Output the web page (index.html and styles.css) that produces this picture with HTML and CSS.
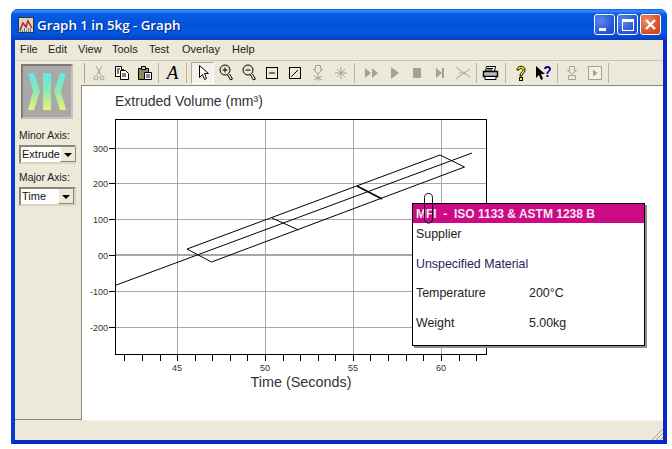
FILE: index.html
```html
<!DOCTYPE html>
<html lang="en">
<head>
    <meta charset="UTF-8">
    <title>Graph 1 in 5kg - Graph</title>
    <link rel="stylesheet" href="styles.css">
</head>
<body>
<div class="window">
    <div class="titlebar">
        <svg class="app-icon" width="16" height="16" viewBox="0 0 16 16">
            <rect x="0.5" y="0.5" width="15" height="15" fill="#d8d4c8" stroke="#333"/>
            <path d="M2 13 5 6 8 10 10 4 14 11" fill="none" stroke="#b02020" stroke-width="1.5"/>
            <path d="M2 14h12M2 12h2M6 12h2M10 12h3" stroke="#222" stroke-dasharray="1 1"/>
        </svg>
        <span class="title">Graph 1 in 5kg - Graph</span>
        <div class="caption-btns">
            <span class="cap-btn"><i class="cap-min"></i></span>
            <span class="cap-btn"><i class="cap-max"></i></span>
            <span class="cap-btn cap-close">
                <svg width="13" height="13" viewBox="0 0 13 13"><path d="M2 2 11 11M11 2 2 11" stroke="#fff" stroke-width="2.4"/></svg>
            </span>
        </div>
    </div>

    <div class="menubar">
        <span class="m1">File</span>
        <span class="m2">Edit</span>
        <span class="m3">View</span>
        <span class="m4">Tools</span>
        <span class="m5">Test</span>
        <span class="m6">Overlay</span>
        <span class="m7">Help</span>
    </div>

    <div class="main">
        <div class="side">
            <div class="logo">
                <svg width="46" height="38" viewBox="0 0 46 38">
                    <defs>
                        <linearGradient id="lg" x1="0" y1="0" x2="0" y2="1">
                            <stop offset="0" stop-color="#5fe8e6"/>
                            <stop offset="0.5" stop-color="#8fe8b0"/>
                            <stop offset="1" stop-color="#f0f07a"/>
                        </linearGradient>
                    </defs>
                    <path d="M4 0h6l6 18-6 19H4l5-19z" fill="url(#lg)"/>
                    <path d="M42 0h-6l-6 18 6 19h6l-5-19z" fill="url(#lg)"/>
                    <rect x="19" y="0" width="8" height="37" fill="url(#lg)"/>
                </svg>
            </div>
            <label class="axis-label">Minor Axis:</label>
            <div class="combo"><span class="combo-text">Extrude</span><span class="combo-btn"></span></div>
            <label class="axis-label axis-second">Major Axis:</label>
            <div class="combo"><span class="combo-text">Time</span><span class="combo-btn"></span></div>
        </div>

        <div class="right">
            <div class="toolbar">
                <span class="grip"></span>
                <span class="tb"><svg width="16" height="16" viewBox="0 0 16 16" fill="none" stroke="#a5a295"><path d="M5 1 10 10M11 1 6 10"/><circle cx="5" cy="13" r="2"/><circle cx="11" cy="13" r="2"/></svg></span>
                <span class="tb"><svg width="16" height="16" viewBox="0 0 16 16"><path d="M1.500 1.500h6v3h2v7h-8z" fill="#fff" stroke="#000"/><path d="M6.500 5.500h5l3 3v6h-8z" fill="#fff" stroke="#000"/><path d="M3 4h3M3 6h2M3 8h2M8 9h4M8 11h4" stroke="#000"/></svg></span>
                <span class="tb"><svg width="16" height="16" viewBox="0 0 16 16"><path d="M1.500 3.500h10v11h-10z" fill="#8a8a52" stroke="#000"/><path d="M4.500 1.500h4v3h-4z" fill="#ccc" stroke="#000"/><path d="M7.500 7.500h7v7h-7z" fill="#fff" stroke="#000"/><path d="M9 10h4M9 12h4" stroke="#008"/></svg></span>
                <span class="sep"></span>
                <span class="tb tb-a">A</span>
                <span class="sep"></span>
                <span class="tb tb-on tb-gap"><svg width="16" height="18" viewBox="0 0 16 18"><path d="M4.500 1.500v12l3-3 2 5 2-1-2-5h4z" fill="#fff" stroke="#000"/></svg></span>
                <span class="tb"><svg width="16" height="18" viewBox="0 0 16 18" fill="none" stroke="#000"><circle cx="7" cy="6" r="5"/><path d="M7 3.500v5M4.500 6h5M9.500 11l3 5 2-1-3-5"/></svg></span>
                <span class="tb"><svg width="16" height="18" viewBox="0 0 16 18" fill="none" stroke="#000"><circle cx="7" cy="6" r="5"/><path d="M4.500 6h5M9.500 11l3 5 2-1-3-5"/></svg></span>
                <span class="tb"><svg width="14" height="14" viewBox="0 0 14 14" fill="none" stroke="#000"><rect x="1.500" y="1.500" width="11" height="11"/><path d="M4 7h6"/></svg></span>
                <span class="tb"><svg width="14" height="14" viewBox="0 0 14 14" fill="none" stroke="#000"><rect x="1.500" y="1.500" width="11" height="11"/><path d="M3.500 10.500 10 4"/></svg></span>
                <span class="tb"><svg width="16" height="18" viewBox="0 0 16 18" fill="none" stroke="#a5a295"><path d="M5.500 1.500h5v4h2L8 10 3.500 5.500h2zM8 10v7M4 12l8 4M12 12l-8 4"/></svg></span>
                <span class="tb"><svg width="16" height="16" viewBox="0 0 16 16" fill="none" stroke="#a5a295"><path d="M8 2v12M2 8h12M4 4l8 8M12 4l-8 8"/></svg></span>
                <span class="sep"></span>
                <span class="tb tb-gap"><svg width="16" height="12" viewBox="0 0 16 12" fill="#a5a295"><path d="M2 1l6 5-6 5zM9 1l6 5-6 5z"/></svg></span>
                <span class="tb"><svg width="12" height="12" viewBox="0 0 12 12" fill="#a5a295"><path d="M3 0l8 6-8 6z"/></svg></span>
                <span class="tb"><svg width="10" height="12" viewBox="0 0 10 12" fill="#a5a295"><rect x="1" y="1" width="8" height="10"/></svg></span>
                <span class="tb"><svg width="12" height="12" viewBox="0 0 12 12" fill="#a5a295"><path d="M2 1l6 5-6 5zM8 1h2v10H8z"/></svg></span>
                <span class="tb"><svg width="16" height="14" viewBox="0 0 16 14" fill="none" stroke="#a5a295"><path d="M1 1 9 7 15 3M1 13 9 7 15 11M4 7h3"/></svg></span>
                <span class="sep"></span>
                <span class="tb"><svg width="17" height="15" viewBox="0 0 17 15"><path d="M4.500 .5h9l-1 5h-9z" fill="#fff" stroke="#000"/><path d="M1.500 5.500h14v5h-14z" fill="#bbb" stroke="#000" stroke-width="1.400"/><path d="M3 10.500h11v3H3z" fill="#fff" stroke="#000"/><path d="M5 2.500h6M4.500 4h6" stroke="#000"/></svg></span>
                <span class="sep sep-wide"></span>
                <span class="tb"><svg width="12" height="16" viewBox="0 0 12 16"><path d="M2 5C2 0 10 0 10 5c0 3-3 3-3 6H5C5 7 8 7 8 5 8 3 4 3 4 5z" fill="#ff0" stroke="#000"/><rect x="4.500" y="12.500" width="3" height="3" fill="#ff0" stroke="#000"/></svg></span>
                <span class="tb"><svg width="17" height="16" viewBox="0 0 17 16"><path d="M1 1v12l3-3 2 5 2-1-2-5h4z" fill="#000"/><path d="M9 4C9 0 16 0 16 4c0 2-3 3-3 5h-1.500C11.500 6 14 6 14 4 14 2.500 11 2.500 11 4z" fill="#000080"/><rect x="11.500" y="10" width="2" height="2" fill="#000080"/></svg></span>
                <span class="sep"></span>
                <span class="tb"><svg width="12" height="16" viewBox="0 0 12 16" fill="none" stroke="#a5a295"><path d="M3.500 1.500h5v4h2L6 9 1.500 5.500h2zM2.500 10.500h7v4h-7z"/></svg></span>
                <span class="tb"><svg width="14" height="14" viewBox="0 0 14 14"><rect x=".5" y=".5" width="13" height="13" fill="#f2f0e6" stroke="#a5a295"/><path d="M5 3.500 9.500 7 5 10.500z" fill="#a5a295"/></svg></span>
                <span class="sep"></span>
            </div>

            <div class="canvas">
                <svg class="plot" width="581" height="334" viewBox="82 86 581 334">
                    <g stroke="#a8a8a0" fill="none">
                        <path d="M177.500 119V354M265.500 119V354M353.500 119V354M441.500 119V354"/>
                        <path d="M115 148.500H486M115 183.500H486M115 219.500H486M115 291.500H486M115 327.500H486"/>
                        <path d="M115 255H486" stroke-width="2"/>
                    </g>
                    <rect x="115.500" y="119.500" width="371" height="235" fill="none" stroke="#000"/>
                    <g stroke="#000" fill="none">
                        <path d="M109 148.500h6M109 183.500h6M109 219.500h6M109 255.500h6M109 291.500h6M109 327.500h6"/>
                        <path d="M124.500 354v7M142.500 354v7M160.500 354v7M177.500 354v7M195.500 354v7M212.500 354v7M230.500 354v7M247.500 354v7M265.500 354v7M283.500 354v7M300.500 354v7M318.500 354v7M335.500 354v7M353.500 354v7M370.500 354v7M388.500 354v7M406.500 354v7M423.500 354v7M441.500 354v7M459.500 354v7M476.500 354v7"/>
                        <path d="M115 285.500 472 153"/>
                        <path d="M187 249 440 155 464.500 167 211.500 262z"/>
                        <path d="M272 218 298.500 230"/>
                        <path d="M357 186 382 199" stroke-width="1.500"/>
                    </g>
                    <text class="t-ylabel" x="115" y="106">Extruded Volume (mm³)</text>
                    <g class="t-tick" text-anchor="end">
                        <text x="108" y="152">300</text>
                        <text x="108" y="187">200</text>
                        <text x="108" y="223">100</text>
                        <text x="108" y="259">00</text>
                        <text x="108" y="295">-100</text>
                        <text x="108" y="331">-200</text>
                    </g>
                    <g class="t-tick" text-anchor="middle">
                        <text x="177" y="371">45</text>
                        <text x="265" y="371">50</text>
                        <text x="353" y="371">55</text>
                        <text x="441" y="371">60</text>
                    </g>
                    <text class="t-xlabel" x="301" y="387" text-anchor="middle">Time (Seconds)</text>
                </svg>

                <div class="note">
                    <div class="note-head">MFI &nbsp;-&nbsp; ISO 1133 &amp; ASTM 1238 B</div>
                    <div class="note-row">Supplier</div>
                    <div class="note-row note-material">Unspecified Material</div>
                    <div class="note-row note-prop"><span class="prop-name">Temperature</span><span>200°C</span></div>
                    <div class="note-row note-prop"><span class="prop-name">Weight</span><span>5.00kg</span></div>
                </div>
                <svg class="clip" width="10" height="31" viewBox="0 0 10 31" fill="none" stroke="#111">
                    <path d="M.5 4.500C.5 -1 8.500 -1 8.500 4.500V26C8.500 31.500 .5 31.500 .5 26Z"/>
                </svg>
            </div>
        </div>
    </div>

    <div class="statusbar">
        <svg class="sizer" width="12" height="12" viewBox="0 0 12 12" stroke="#a5a295" fill="none">
            <path d="M1 12 12 1M5 12 12 5M9 12 12 9"/>
        </svg>
    </div>
</div>
</body>
</html>
```

FILE: styles.css
```css
html, body {
    margin: 0;
    padding: 0;
    background-color: #fff;
    overflow: hidden;
}
body {
    font-family: "Liberation Sans", Arial, sans-serif;
    height: 449px;
}
.window {
    box-sizing: border-box;
    width: 656px;
    height: 435px;
    margin: 9px 0 0 11px;
    display: flex;
    flex-direction: column;
    background-color: #ece9d8;
    border-radius: 7px 7px 0 0;
    border: 4px solid #0831d9;
    border-top: 0;
    border-left-color: #0a3ad6;
    border-right-color: #0a2ac8;
    border-bottom-color: #0829c4;
}
.titlebar {
    height: 31px;
    margin: 0 -4px;
    padding: 0 6px 0 4px;
    flex: none;
    display: flex;
    align-items: center;
    color: #fff;
    border-radius: 7px 7px 0 0;
    background: linear-gradient(#0a5fe6 0, #3b8cf6 2px, #0a5ce0 5px, #0253dc 14px, #0358e4 24px, #0645c8 29px, #0a3cb8 31px);
}
.app-icon {
    margin: 0 3px;
}
.title {
    font-family: "Open Sans", sans-serif;
    font-weight: 600;
    font-size: 13.3px;
    text-shadow: 1px 1px 1px #0a2a80;
}
.caption-btns {
    margin-left: auto;
    display: flex;
    gap: 2px;
}
.cap-btn {
    box-sizing: border-box;
    width: 21px;
    height: 21px;
    display: flex;
    align-items: center;
    justify-content: center;
    position: relative;
    border: 1px solid #fff;
    border-radius: 3px;
    background: radial-gradient(circle at 30% 30%, #5b86ec, #2450d0 75%);
}
.cap-close {
    background: radial-gradient(circle at 30% 30%, #ee8a6c, #d4481f 75%);
}
.cap-min {
    width: 7px;
    height: 3px;
    background-color: #fff;
    position: absolute;
    left: 4px;
    bottom: 3px;
}
.cap-max {
    box-sizing: border-box;
    width: 12px;
    height: 12px;
    border: 1px solid #fff;
    border-top-width: 3px;
}

.menubar {
    height: 20px;
    flex: none;
    position: relative;
    font-size: 11px;
    line-height: 18px;
    color: #222;
}
.menubar span {
    position: absolute;
    top: 0;
}
.m1 { left: 5px; }
.m2 { left: 33px; }
.m3 { left: 63px; }
.m4 { left: 97px; }
.m5 { left: 134px; }
.m6 { left: 167px; }
.m7 { left: 217px; }

.main {
    flex: 1;
    display: flex;
    min-height: 0;
}
.side {
    width: 66px;
    flex: none;
    box-sizing: border-box;
    padding: 3px 0 0 4px;
    border-top: 1px solid #d8d4c4;
    border-bottom: 1px solid #8a8778;
}
.logo {
    box-sizing: border-box;
    width: 52px;
    height: 55px;
    margin-left: 2px;
    display: flex;
    align-items: center;
    justify-content: center;
    background-color: #aaa8a8;
    border: 2px solid #7d7d76;
    border-right-color: #c4c4ba;
    border-bottom-color: #c4c4ba;
}
.axis-label {
    display: block;
    margin-top: 10px;
    font-size: 10.4px;
    line-height: 13px;
    color: #222;
}
.axis-second {
    margin-top: 7px;
}
.combo {
    box-sizing: border-box;
    width: 57px;
    height: 19px;
    margin-top: 3px;
    display: flex;
    background-color: #fff;
    border: 2px solid #8a8778;
    border-right-color: #d8d4c4;
    border-bottom-color: #d8d4c4;
}
.combo-text {
    flex: 1;
    padding-left: 1px;
    font-size: 11px;
    line-height: 15px;
    color: #111;
}
.combo-btn {
    box-sizing: border-box;
    width: 16px;
    flex: none;
    position: relative;
    background-color: #ece9d8;
    border-left: 1px solid #fff;
    border-right: 1px solid #8a8778;
    border-bottom: 1px solid #8a8778;
}
.combo-btn::after {
    content: "";
    position: absolute;
    left: 3px;
    top: 6px;
    border-style: solid;
    border-width: 4px 4px 0 4px;
    border-color: #000 transparent transparent transparent;
}

.right {
    flex: 1;
    display: flex;
    flex-direction: column;
    min-width: 0;
}
.toolbar {
    height: 25px;
    flex: none;
    box-sizing: border-box;
    display: flex;
    align-items: center;
    padding-left: 3px;
    border-top: 1px solid #c8c5b4;
}
.grip {
    width: 1px;
    height: 20px;
    margin-right: 2px;
    background-color: #aca899;
}
.tb {
    width: 23px;
    height: 22px;
    flex: none;
    display: flex;
    align-items: center;
    justify-content: center;
}
.tb-gap {
    margin-left: 2px;
}
.tb-a {
    font-family: "Liberation Serif", serif;
    font-style: italic;
    font-size: 19px;
    color: #000;
}
.tb-on {
    box-sizing: border-box;
    background-color: #f4f2ea;
    border: 1px solid #fff;
    border-top-color: #aca899;
    border-left-color: #aca899;
}
.sep {
    width: 1px;
    height: 20px;
    margin: 0 2px;
    flex: none;
    background-color: #b8b5a6;
}
.sep-wide {
    margin: 0 3px;
}
.canvas {
    flex: 1;
    position: relative;
    background-color: #fff;
    border-top: 1px solid #8a8778;
    border-left: 1px solid #8a8778;
    border-bottom: 1px solid #f4f2ea;
}
.plot {
    display: block;
}
.t-ylabel {
    font-size: 14px;
    fill: #333;
}
.t-xlabel {
    font-size: 14.4px;
    fill: #333;
}
.t-tick {
    font-size: 9px;
    fill: #333;
}

.note {
    box-sizing: border-box;
    position: absolute;
    left: 330px;
    top: 117px;
    width: 233px;
    height: 143px;
    background-color: #fff;
    border: 1px solid #000;
    box-shadow: 2px 2px 0 #8f8f88;
    font-size: 12.4px;
    color: #222;
}
.note-head {
    height: 19px;
    padding-left: 3px;
    background-color: #cc0a85;
    color: #f6e6f2;
    font-size: 12px;
    font-weight: bold;
    line-height: 20px;
}
.note-row {
    height: 29.700px;
    padding-left: 3px;
    line-height: 22px;
}
.note-material {
    color: #2e1a5a;
}
.note-prop {
    display: flex;
}
.prop-name {
    width: 113px;
}
.clip {
    position: absolute;
    left: 342px;
    top: 107px;
}

.statusbar {
    height: 20px;
    flex: none;
    position: relative;
}
.sizer {
    position: absolute;
    right: 0;
    bottom: 0;
}
```
